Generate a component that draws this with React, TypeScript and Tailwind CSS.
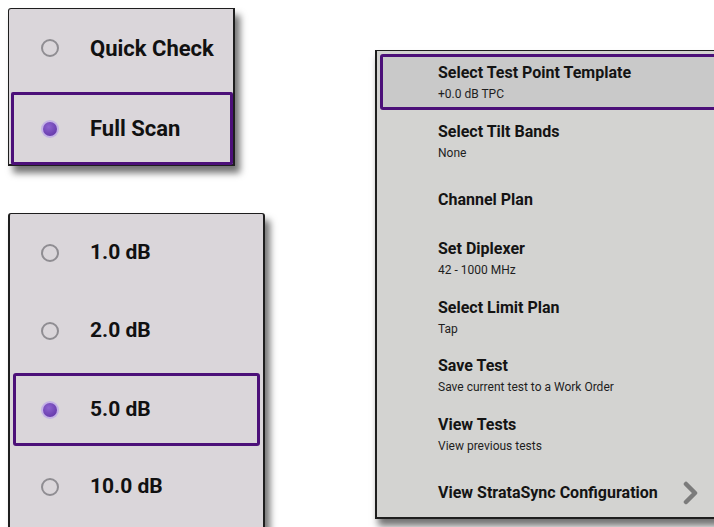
import React from "react";

const font = { fontFamily: "Roboto, 'Liberation Sans', sans-serif" };

function Radio({ on }: { on?: boolean }) {
  if (on) {
    return (
      <div className="w-[18px] h-[18px] rounded-full bg-[#c4b2e6] flex items-center justify-center">
        <div className="w-[14px] h-[14px] rounded-full bg-[radial-gradient(circle_at_40%_35%,#8d63d0,#5b2fa0)]" />
      </div>
    );
  }
  return <div className="w-[18px] h-[18px] rounded-full border-2 border-[#8f8d92]" />;
}

function Choice({ label, on, size }: { label: string; on?: boolean; size: string }) {
  return (
    <div className="flex items-center h-full">
      <div className="w-[80px] flex justify-center">
        <Radio on={on} />
      </div>
      <span className={`font-bold text-[#111] ${size}`}>{label}</span>
    </div>
  );
}

const menu: { t: string; s?: string; chevron?: boolean }[] = [
  { t: "Select Test Point Template", s: "+0.0 dB TPC" },
  { t: "Select Tilt Bands", s: "None" },
  { t: "Channel Plan" },
  { t: "Set Diplexer", s: "42 - 1000 MHz" },
  { t: "Select Limit Plan", s: "Tap" },
  { t: "Save Test", s: "Save current test to a Work Order" },
  { t: "View Tests", s: "View previous tests" },
  { t: "View StrataSync Configuration", chevron: true },
];

export default function App() {
  return (
    <div className="relative w-[714px] h-[527px] bg-white overflow-hidden" style={font}>
      {/* Panel 1 */}
      <div className="absolute left-[8px] top-[8px] w-[227px] h-[158px] border border-[#1e1e1e] border-r-2 border-b-2 bg-[#dad6da] rounded-tl-[3px] shadow-[5px_7px_7px_rgba(0,0,0,0.55)] flex flex-col">
        <div className="h-[83px] shrink-0 pb-[5px] pl-[1px]">
          <Choice label="Quick Check" size="text-[22px]" />
        </div>
        <div className="flex-1 ml-[2px] border-[3px] border-[#4c1079] rounded-[2px] -mb-[1px]">
          <div className="-ml-[4px] -mt-[3px] h-[calc(100%+6px)]">
            <Choice label="Full Scan" on size="text-[22px]" />
          </div>
        </div>
      </div>

      {/* Panel 2 */}
      <div className="absolute left-[8px] top-[213px] w-[257px] h-[330px] border-t border-l-2 border-r-2 border-[#1e1e1e] bg-[#dad6da] rounded-t-[3px] shadow-[5px_7px_7px_rgba(0,0,0,0.55)] flex flex-col">
        {["1.0 dB", "2.0 dB", "5.0 dB", "10.0 dB"].map((l, i) =>
          i === 2 ? (
            <div key={l} className="h-[78px] shrink-0 pt-[3px] pb-[2px] px-[3px]">
              <div className="h-full border-[3px] border-[#4c1079] rounded-[3px]">
                <div className="-ml-[6px] h-full">
                  <Choice label={l} on size="text-[21px]" />
                </div>
              </div>
            </div>
          ) : (
            <div key={l} className="h-[78px] shrink-0">
              <Choice label={l} size="text-[21px]" />
            </div>
          )
        )}
      </div>

      {/* Panel 3 */}
      <div className="absolute left-[375px] top-[50px] w-[360px] h-[469px] border-t border-l-2 border-b-2 border-[#1e1e1e] bg-[#d3d3d1] shadow-[3px_7px_7px_rgba(0,0,0,0.55)] pt-[3px]">
        {menu.map((m, i) => {
          const inner = (
            <div className={`flex items-center h-full pl-[61px] ${i === 0 ? "-ml-[6px]" : ""}`}>
              <div className="flex-1 flex flex-col justify-center">
                <div className="text-[16px] font-bold text-[#141414] leading-[20px]">{m.t}</div>
                {m.s && <div className="text-[12px] text-[#1e1e1e] leading-[16px] mt-[3px]">{m.s}</div>}
              </div>
              {m.chevron && (
                <svg width="20" height="24" viewBox="0 0 20 24" className="mr-[34px]">
                  <polyline points="5,3 14,12 5,21" fill="none" stroke="#7b7b7b" strokeWidth="4.5" strokeLinejoin="round" strokeLinecap="round" />
                </svg>
              )}
            </div>
          );
          return i === 0 ? (
            <div key={m.t} className="h-[56px] ml-[3px] border-[3px] border-[#4c1079] rounded-[3px] bg-[#c9c9c9] mb-[2px]">
              {inner}
            </div>
          ) : (
            <div key={m.t} className="h-[58.6px]">{inner}</div>
          );
        })}
      </div>
    </div>
  );
}
